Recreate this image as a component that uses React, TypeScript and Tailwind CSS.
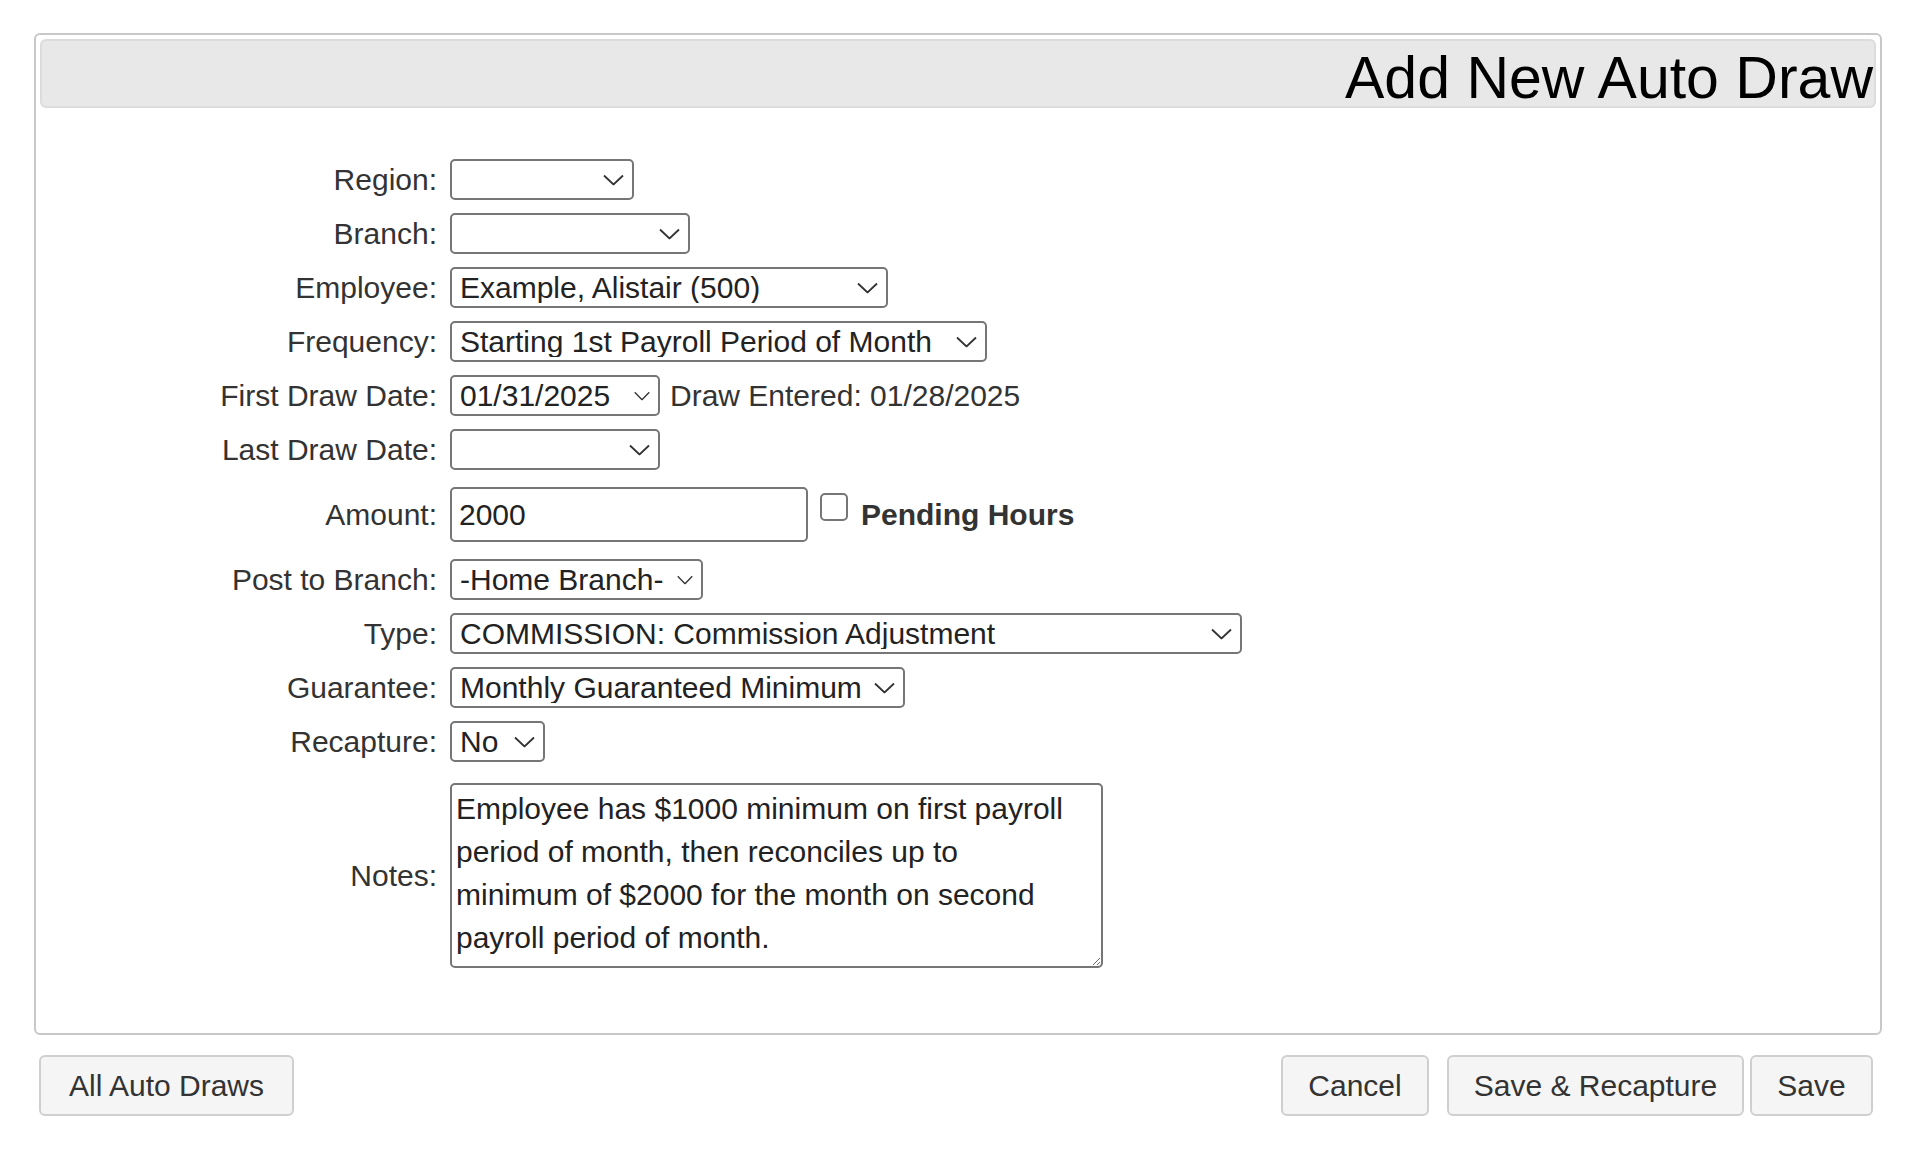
import type { ReactNode } from "react";

function Chevron({ small = false }: { small?: boolean }) {
  return (
    <svg
      className="pointer-events-none absolute right-[10px] top-1/2 -translate-y-1/2"
      width={small ? 16 : 21}
      height={small ? 9 : 11}
      viewBox="0 0 21 11"
      preserveAspectRatio="none"
      fill="none"
    >
      <path d="M1 1 L10.5 10 L20 1" stroke="#333" strokeWidth="1.8" />
    </svg>
  );
}

function Select({ width, value, small }: { width: string; value?: string; small?: boolean }) {
  return (
    <div className={`relative shrink-0 ${width}`}>
      <select
        defaultValue={value ?? ""}
        className="block h-[41px] w-full appearance-none rounded-[5px] border-2 border-[#767676] bg-white pl-[8px] pr-[36px] text-[30px] leading-none text-[#222] outline-none"
      >
        <option value={value ?? ""}>{value ?? ""}</option>
      </select>
      <Chevron small={small} />
    </div>
  );
}

function Row({ label, children, className = "" }: { label: string; children: ReactNode; className?: string }) {
  return (
    <div className={`flex items-center ${className}`}>
      <label className="w-[414px] shrink-0 pr-[13px] text-right leading-none">{label}</label>
      {children}
    </div>
  );
}

export default function App() {
  return (
    <div className="min-h-screen bg-white pl-[34px] pt-[33px] font-['Liberation_Sans',Arial,sans-serif] text-[30px] text-[#333]">
      <div className="w-[1848px] rounded-[6px] border-2 border-[#c8c8c8] p-[4px] pb-[65px]">
        <div className="h-[69px] rounded-[6px] border-2 border-[#dcdcdc] bg-[#e8e8e8] pr-[1px] pt-[8px] text-right text-[59px] leading-none text-black">
          Add New Auto Draw
        </div>

        <div className="mt-[51px] -ml-[4px] flex flex-col gap-[13px]">
          <Row label="Region:">
            <Select width="w-[184px]" />
          </Row>
          <Row label="Branch:">
            <Select width="w-[240px]" />
          </Row>
          <Row label="Employee:">
            <Select width="w-[438px]" value="Example, Alistair (500)" />
          </Row>
          <Row label="Frequency:">
            <Select width="w-[537px]" value="Starting 1st Payroll Period of Month" />
          </Row>
          <Row label="First Draw Date:">
            <Select width="w-[210px]" value="01/31/2025" small />
            <span className="ml-[10px] leading-none">Draw Entered: 01/28/2025</span>
          </Row>
          <Row label="Last Draw Date:">
            <Select width="w-[210px]" />
          </Row>
          <Row label="Amount:" className="mt-[4px]">
            <input
              defaultValue="2000"
              className="h-[55px] w-[358px] shrink-0 rounded-[5px] border-2 border-[#767676] bg-white px-[7px] text-[30px] text-[#222] outline-none"
            />
            <input
              type="checkbox"
              className="ml-[12px] mt-[6px] h-[28px] w-[28px] shrink-0 self-start appearance-none rounded-[5px] border-2 border-[#767676] bg-white"
            />
            <span className="ml-[13px] font-bold leading-none">Pending Hours</span>
          </Row>
          <Row label="Post to Branch:" className="mt-[4px]">
            <Select width="w-[253px]" value="-Home Branch-" small />
          </Row>
          <Row label="Type:">
            <Select width="w-[792px]" value="COMMISSION: Commission Adjustment" />
          </Row>
          <Row label="Guarantee:">
            <Select width="w-[455px]" value="Monthly Guaranteed Minimum" />
          </Row>
          <Row label="Recapture:">
            <Select width="w-[95px]" value="No" />
          </Row>
          <Row label="Notes:" className="mt-[8px]">
            <textarea
              defaultValue="Employee has $1000 minimum on first payroll period of month, then reconciles up to minimum of $2000 for the month on second payroll period of month."
              className="block h-[185px] w-[653px] shrink-0 rounded-[5px] border-2 border-[#767676] bg-white pl-[4px] pr-[25px] pt-[2px] text-[30px] leading-[43px] text-[#222] outline-none"
            />
          </Row>
        </div>
      </div>

      <div className="mt-[20px] flex w-[1848px] items-center pl-[5px] pr-[9px]">
        <button className="h-[61px] w-[255px] rounded-[6px] border-2 border-[#cfcfcf] bg-[#f5f5f5] text-[30px] text-[#333]">
          All Auto Draws
        </button>
        <div className="ml-auto flex items-center">
          <button className="h-[61px] w-[148px] rounded-[6px] border-2 border-[#cfcfcf] bg-[#f5f5f5] text-[30px] text-[#333]">
            Cancel
          </button>
          <button className="ml-[18px] h-[61px] w-[297px] rounded-[6px] border-2 border-[#cfcfcf] bg-[#f5f5f5] text-[30px] text-[#333]">
            Save &amp; Recapture
          </button>
          <button className="ml-[6px] h-[61px] w-[123px] rounded-[6px] border-2 border-[#cfcfcf] bg-[#f5f5f5] text-[30px] text-[#333]">
            Save
          </button>
        </div>
      </div>
    </div>
  );
}
